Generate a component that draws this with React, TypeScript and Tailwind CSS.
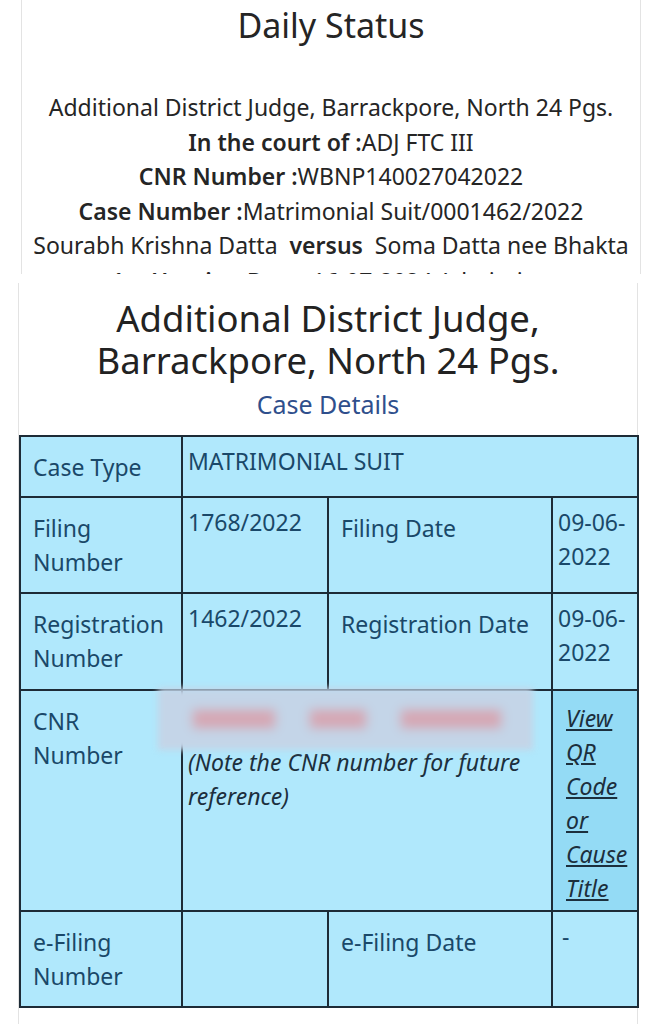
const labelCell =
  "border-2 border-[#1d2b36] align-top pl-[12px] pr-2 pt-[13px] pb-1 text-[#1a4869]";
const valueCell =
  "border-2 border-[#1d2b36] align-top pl-[5px] pr-2 pt-[7px] pb-1 text-[#1a4869]";

const DailyStatus = () => {
  return (
    <div className="ml-[21px] w-[620px] h-[274px] overflow-hidden border-x border-[#e3e3e3] text-center text-[#252525]">
      <h1 className="pt-[3px] text-[34px] leading-[44px]">Daily Status</h1>
      <div className="mt-[43px] text-[23px] leading-[34.5px]">
        <p>Additional District Judge, Barrackpore, North 24 Pgs.</p>
        <p>
          <span className="font-semibold">In the court of :</span>ADJ FTC III
        </p>
        <p>
          <span className="font-semibold">CNR Number :</span>WBNP140027042022
        </p>
        <p>
          <span className="font-semibold">Case Number :</span>Matrimonial
          Suit/0001462/2022
        </p>
        <p>
          Sourabh Krishna Datta&nbsp; <span className="font-semibold">versus</span>
          &nbsp; Soma Datta nee Bhakta
        </p>
        <p className="mt-[1px]">
          <span className="font-semibold">1st Hearing Date :</span>16-07-2024
          Admission
        </p>
      </div>
    </div>
  );
};

const Redacted = () => (
  <div className="relative h-[47px]">
    <div className="absolute -left-[30px] -top-[10px] w-[375px] h-[62px] bg-[#c4d5e8] blur-[3px] flex items-center gap-[35px] pl-[35px]">
      <div className="w-[82px] h-[18px] bg-[#d6a6b2] blur-[4px]" />
      <div className="w-[56px] h-[18px] bg-[#d6a6b2] blur-[4px]" />
      <div className="w-[100px] h-[18px] bg-[#d6a6b2] blur-[4px]" />
    </div>
  </div>
);

const CaseDetails = () => {
  return (
    <div className="ml-[18px] mt-[9px] w-[620px] border-x border-[#e3e3e3] pb-[17px]">
      <div className="text-center pt-[14px] pb-[14px]">
        <h2 className="text-[36.5px] leading-[42px] text-[#222]">
          Additional District Judge,
          <br />
          Barrackpore, North 24 Pgs.
        </h2>
        <h3 className="mt-[6px] text-[25px] leading-[34px] text-[#2f4f8c]">
          Case Details
        </h3>
      </div>

      <table className="table-fixed border-collapse w-[618px] bg-[#b0e8fc] text-[23px] leading-[34px]">
        <colgroup>
          <col className="w-[162px]" />
          <col className="w-[146px]" />
          <col className="w-[224px]" />
          <col className="w-[86px]" />
        </colgroup>
        <tbody>
          <tr className="h-[61px]">
            <td className={labelCell}>Case Type</td>
            <td className={valueCell} colSpan={3}>
              MATRIMONIAL SUIT
            </td>
          </tr>
          <tr className="h-[96px]">
            <td className={labelCell}>
              Filing
              <br />
              Number
            </td>
            <td className={valueCell}>1768/2022</td>
            <td className={`${labelCell} pl-[9px]`}>Filing Date</td>
            <td className={`${valueCell} pr-0`}>
              09-06-
              <br />
              2022
            </td>
          </tr>
          <tr className="h-[97px]">
            <td className={labelCell}>
              Registration
              <br />
              Number
            </td>
            <td className={valueCell}>1462/2022</td>
            <td className={`${labelCell} pl-[9px]`}>Registration Date</td>
            <td className={`${valueCell} pr-0`}>
              09-06-
              <br />
              2022
            </td>
          </tr>
          <tr className="h-[221px]">
            <td className={labelCell}>
              CNR
              <br />
              Number
            </td>
            <td className={valueCell} colSpan={2}>
              <Redacted />
              <p className="italic whitespace-nowrap text-[#1c2f3d]">
                (Note the CNR number for future
                <br />
                reference)
              </p>
            </td>
            <td className="border-2 border-[#1d2b36] align-top bg-[#94dbf5] pl-[13px] pr-0 pt-[10px] pb-0">
              <a className="italic underline text-[#1c2f3d]" href="#">
                View
                <br />
                QR
                <br />
                Code
                <br />
                or
                <br />
                Cause
                <br />
                Title
              </a>
            </td>
          </tr>
          <tr className="h-[96px]">
            <td className={labelCell}>
              e-Filing
              <br />
              Number
            </td>
            <td className={valueCell}></td>
            <td className={`${labelCell} pl-[9px]`}>e-Filing Date</td>
            <td className={`${valueCell} pl-[9px]`}>-</td>
          </tr>
        </tbody>
      </table>
    </div>
  );
};

export default function App() {
  return (
    <div className="w-[661px] h-[1024px] overflow-hidden bg-white font-['Noto_Sans',sans-serif]">
      <DailyStatus />
      <CaseDetails />
    </div>
  );
}
